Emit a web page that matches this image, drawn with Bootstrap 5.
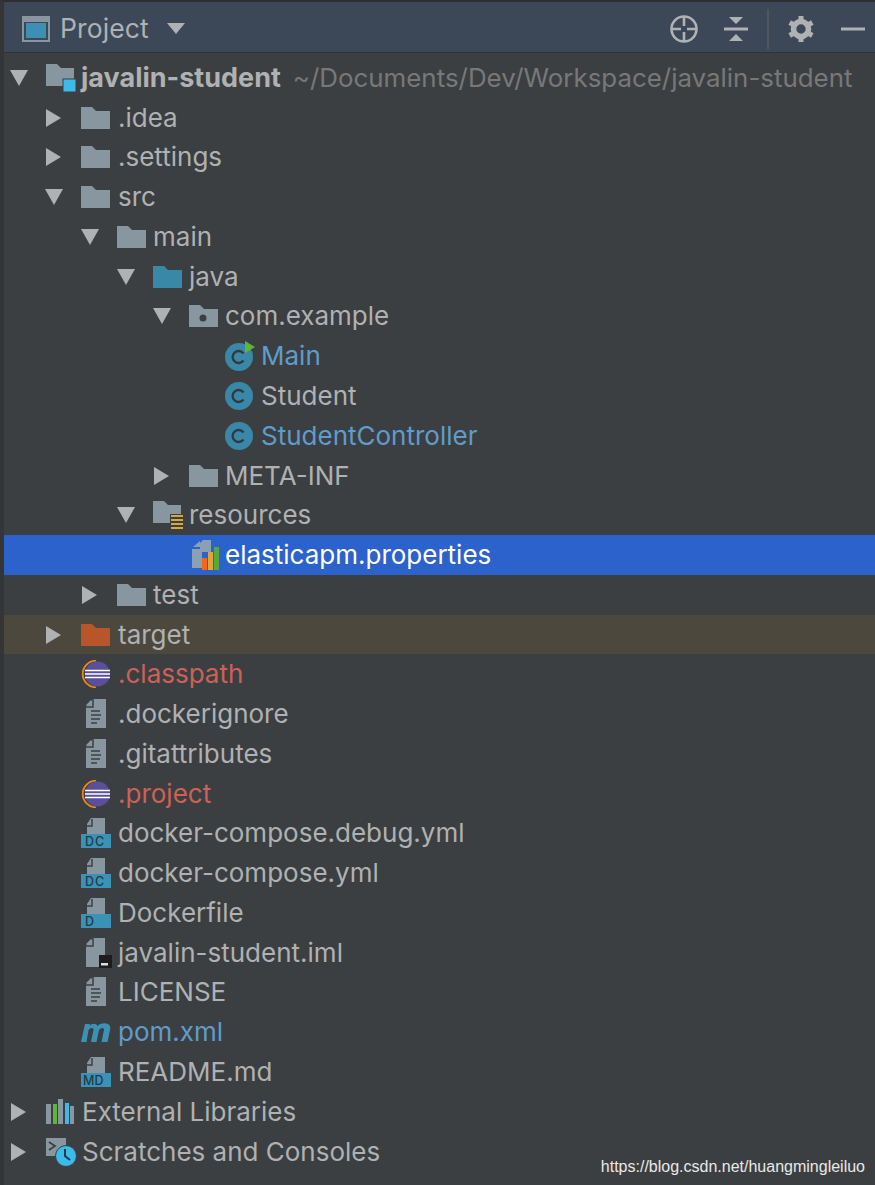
<!DOCTYPE html>
<html lang="en"><head><meta charset="utf-8"><title>Project</title>
<link href="https://cdn.jsdelivr.net/npm/bootstrap@5.3.0/dist/css/bootstrap.min.css" rel="stylesheet">
<style>
html,body{margin:0;height:1185px;overflow:hidden;background:#3c3f41}
.shell{height:1185px;border-left:4px solid #333537;border-top:2px solid #2e2e2e;font-family:Inter,"Liberation Sans",sans-serif;position:relative;color:#afb1b3}
.hdr{height:51px;background:#3c4858;border-bottom:1px solid #323232;color:#afb1b3;padding-left:18px;padding-top:3px}
.hdr-title{font-size:26.5px;margin-left:10px;margin-right:18px;letter-spacing:.1px}
.act-b{margin-left:24px}
.act-sep{display:block;width:2px;height:40px;background:#4f5660;margin-left:18px}
.act-g{margin-left:19px}
.act-m{margin-left:27px;margin-right:10px}
.tree{padding-top:5px}
.rw{height:39.78px;font-size:26px;white-space:nowrap;line-height:1}
.rw svg{flex:none;display:block}
.arr{width:36px;flex:none}
.ico{width:36px;flex:none}
.d0{padding-left:6px}.d1{padding-left:41px}.d2{padding-left:77px}.d3{padding-left:113px}.d4{padding-left:149px}.d5{padding-left:185px}
.d1 .ico{width:37px}
.sel{background:#2c62cc;color:#fff}
.exc{background:#4d483d}
.lnk{color:#5f9ccb}
.red{color:#cc6155}
.pth{color:#787878;font-weight:400;margin-left:12px;font-size:25.9px}
.bld{font-weight:700;font-size:27px}
.wm{position:absolute;right:10px;bottom:9px;font:16px "Liberation Sans",sans-serif;color:#e8e8e8}
.ind3{margin-left:3px}
.gap5{margin-right:5px}
</style></head><body>
<svg width="0" height="0" class="d-none">
<defs>
<symbol id="down" viewBox="0 0 18 18"><path d="M0 1H18L9 17Z" fill="#afb1b3"/></symbol>
<symbol id="right" viewBox="0 0 18 18"><path d="M1 0V18L16 9Z" fill="#afb1b3"/></symbol>
<symbol id="folder" viewBox="0 0 30 24"><path d="M0 1H11L15 5H29V23H0Z" fill="#87969f"/></symbol>
<symbol id="pfolder" viewBox="0 0 30 24"><path d="M0 1H11L15 5H29V23H0Z" fill="#87969f"/><circle cx="14" cy="14" r="3.5" fill="#3c3f41"/></symbol>
<symbol id="jfolder" viewBox="0 0 30 24"><path d="M0 1H11L15 5H29V23H0Z" fill="#3a88a8"/></symbol>
<symbol id="cls" viewBox="0 0 28 28"><circle cx="14" cy="14" r="14" fill="#3a88a8"/><path d="M18.5 10.5A6 6 0 1 0 18.5 17.5" fill="none" stroke="#32393f" stroke-width="2.4"/></symbol>
<symbol id="doc" viewBox="0 0 22 30"><path d="M8 0H21V29H1V7ZM6 1V6H1Z" fill="#87969f"/><path d="M6 12H15M6 16H16M6 20H15M6 24H12" stroke="#3c3f41" stroke-width="1.6" fill="none"/><path d="M8 0V8H0" fill="none" stroke="#3c3f41" stroke-width="1.5"/></symbol>
<symbol id="dock" viewBox="0 0 30 30"><path d="M10 0H24V16H6V6Z" fill="#87969f"/><path d="M11 1V8H5" fill="none" stroke="#3c3f41" stroke-width="1.5"/><rect x="0" y="16" width="30" height="14" fill="#3a93b6"/></symbol>
<symbol id="ecl" viewBox="0 0 30 28"><path d="M15 .7A13.300 13.300 0 0 0 15 27.300" fill="none" stroke="#e88a1a" stroke-width="1.8"/><circle cx="16.500" cy="14" r="12.500" fill="#5b4f9c"/><path d="M4 10.500H29M4 14H29M4 17.500H29" stroke="#fff" stroke-width="1.5"/></symbol>
</defs></svg>
<div class="shell">
<div class="hdr d-flex align-items-center">
<svg width="28" height="26" viewBox="0 0 28 26"><rect x="1" y="1" width="26" height="24" fill="none" stroke="#87969f" stroke-width="2"/><rect x="1" y="1" width="26" height="5" fill="#87969f"/><rect x="4" y="7" width="20" height="15" fill="#3d8fb5"/></svg>
<span class="hdr-title">Project</span>
<svg width="18" height="11" viewBox="0 0 18 11"><path d="M0 0H18L9 11Z" fill="#afb1b3"/></svg>
<div class="ms-auto d-flex align-items-center">
<svg width="30" height="30" viewBox="0 0 30 30"><circle cx="15" cy="15" r="12.5" fill="none" stroke="#afb1b3" stroke-width="2.6"/><path d="M15 3V12M15 18V27M3 15H12M18 15H27" stroke="#afb1b3" stroke-width="2.6"/></svg>
<svg class="act-b" width="26" height="28" viewBox="0 0 26 28"><path d="M1 14H25" stroke="#afb1b3" stroke-width="3"/><path d="M6 2H20L13 9ZM6 26H20L13 19Z" fill="#afb1b3"/></svg>
<span class="act-sep"></span>
<svg class="act-g" width="26" height="28" viewBox="0 0 26 28"><circle cx="13" cy="14" r="7.5" fill="none" stroke="#afb1b3" stroke-width="5.6"/><path d="M13 1V6M13 22V27M1.700 7.500L6 10M20 18L24.300 20.500M1.700 20.500L6 18M20 10L24.300 7.500" stroke="#afb1b3" stroke-width="5"/></svg>
<svg class="act-m" width="24" height="6" viewBox="0 0 24 6"><path d="M0 3H24" stroke="#afb1b3" stroke-width="3"/></svg>
</div>
</div>
<div class="tree">
<div class="rw d0 d-flex align-items-center"><span class="arr"><svg width="18" height="18"><use href="#down"/></svg></span><svg width="35" height="30" viewBox="0 0 35 30"><path d="M0 1H11L15 5H28V23H0Z" fill="#87969f"/><rect x="17" y="16" width="13" height="13" fill="#3dbbe8" stroke="#3c3f41"/></svg><span class="bld">javalin-student</span><span class="pth">~/Documents/Dev/Workspace/javalin-student</span></div>
<div class="rw d1 d-flex align-items-center"><span class="arr"><svg width="18" height="18"><use href="#right"/></svg></span><span class="ico"><svg width="30" height="24"><use href="#folder"/></svg></span>.idea</div>
<div class="rw d1 d-flex align-items-center"><span class="arr"><svg width="18" height="18"><use href="#right"/></svg></span><span class="ico"><svg width="30" height="24"><use href="#folder"/></svg></span>.settings</div>
<div class="rw d1 d-flex align-items-center"><span class="arr"><svg width="18" height="18"><use href="#down"/></svg></span><span class="ico"><svg width="30" height="24"><use href="#folder"/></svg></span>src</div>
<div class="rw d2 d-flex align-items-center"><span class="arr"><svg width="18" height="18"><use href="#down"/></svg></span><span class="ico"><svg width="30" height="24"><use href="#folder"/></svg></span>main</div>
<div class="rw d3 d-flex align-items-center"><span class="arr"><svg width="18" height="18"><use href="#down"/></svg></span><span class="ico"><svg width="30" height="24"><use href="#jfolder"/></svg></span>java</div>
<div class="rw d4 d-flex align-items-center"><span class="arr"><svg width="18" height="18"><use href="#down"/></svg></span><span class="ico"><svg width="30" height="24"><use href="#pfolder"/></svg></span>com.example</div>
<div class="rw d5 d-flex align-items-center lnk"><span class="arr"></span><span class="ico"><svg width="30" height="30" viewBox="0 0 30 30"><use href="#cls" width="28" height="28" y="2"/><path d="M20 0V12L30 6Z" fill="#5fb536"/></svg></span>Main</div>
<div class="rw d5 d-flex align-items-center"><span class="arr"></span><span class="ico"><svg width="28" height="28"><use href="#cls"/></svg></span>Student</div>
<div class="rw d5 d-flex align-items-center lnk"><span class="arr"></span><span class="ico"><svg width="28" height="28"><use href="#cls"/></svg></span>StudentController</div>
<div class="rw d4 d-flex align-items-center"><span class="arr"><svg width="18" height="18"><use href="#right"/></svg></span><span class="ico"><svg width="30" height="24"><use href="#folder"/></svg></span>META-INF</div>
<div class="rw d3 d-flex align-items-center"><span class="arr"><svg width="18" height="18"><use href="#down"/></svg></span><span class="ico"><svg width="32" height="30" viewBox="0 0 32 30"><path d="M0 1H11L15 5H28V23H0Z" fill="#87969f"/><rect x="17" y="14" width="13" height="15" fill="#3c3f41"/><path d="M18 16H30M18 20H30M18 24H30M18 28H30" stroke="#dba73c" stroke-width="2"/></svg></span>resources</div>
<div class="rw d4 sel d-flex align-items-center"><span class="arr"></span><span class="ico"><svg class="ind3" width="28" height="30" viewBox="0 0 28 30"><path d="M11 0H19V12H10V28H0V9H8V3ZM8 1V7H1Z" fill="#8aa0b4"/><rect x="10" y="18" width="5" height="12" fill="#f26522"/><rect x="16" y="12" width="5" height="18" fill="#dba73c"/><rect x="22" y="7" width="5" height="23" fill="#59a83c"/></svg></span>elasticapm.properties</div>
<div class="rw d2 d-flex align-items-center"><span class="arr"><svg width="18" height="18"><use href="#right"/></svg></span><span class="ico"><svg width="30" height="24"><use href="#folder"/></svg></span>test</div>
<div class="rw d1 exc d-flex align-items-center"><span class="arr"><svg width="18" height="18"><use href="#right"/></svg></span><span class="ico"><svg width="30" height="24" viewBox="0 0 30 24"><path d="M0 1H11L15 5H29V23H0Z" fill="#b8562a"/></svg></span>target</div>
<div class="rw d1 d-flex align-items-center red"><span class="arr"></span><span class="ico"><svg width="30" height="28"><use href="#ecl"/></svg></span>.classpath</div>
<div class="rw d1 d-flex align-items-center"><span class="arr"></span><span class="ico"><svg class="ms-1" width="22" height="30"><use href="#doc"/></svg></span>.dockerignore</div>
<div class="rw d1 d-flex align-items-center"><span class="arr"></span><span class="ico"><svg class="ms-1" width="22" height="30"><use href="#doc"/></svg></span>.gitattributes</div>
<div class="rw d1 d-flex align-items-center red"><span class="arr"></span><span class="ico"><svg width="30" height="28"><use href="#ecl"/></svg></span>.project</div>
<div class="rw d1 d-flex align-items-center"><span class="arr"></span><span class="ico"><svg width="30" height="30" viewBox="0 0 30 30"><use href="#dock"/><text x="4" y="28" font-family="Inter,sans-serif" font-weight="500" font-size="12.500" letter-spacing="1" fill="#26394a">DC</text></svg></span>docker-compose.debug.yml</div>
<div class="rw d1 d-flex align-items-center"><span class="arr"></span><span class="ico"><svg width="30" height="30" viewBox="0 0 30 30"><use href="#dock"/><text x="4" y="28" font-family="Inter,sans-serif" font-weight="500" font-size="12.500" letter-spacing="1" fill="#26394a">DC</text></svg></span>docker-compose.yml</div>
<div class="rw d1 d-flex align-items-center"><span class="arr"></span><span class="ico"><svg width="30" height="30" viewBox="0 0 30 30"><use href="#dock"/><text x="4" y="28" font-family="Inter,sans-serif" font-weight="500" font-size="12.500" fill="#26394a">D</text></svg></span>Dockerfile</div>
<div class="rw d1 d-flex align-items-center"><span class="arr"></span><span class="ico"><svg class="ms-1" width="28" height="30" viewBox="0 0 28 30"><path d="M8 0H20V17H14V29H1V7ZM6 1V6H1Z" fill="#87969f"/><path d="M8 0V8H0" fill="none" stroke="#3c3f41" stroke-width="1.5"/><rect x="14" y="17" width="13" height="13" fill="#1d1d1d"/><rect x="16" y="25" width="7" height="2.500" fill="#ddd"/></svg></span>javalin-student.iml</div>
<div class="rw d1 d-flex align-items-center"><span class="arr"></span><span class="ico"><svg class="ms-1" width="22" height="30"><use href="#doc"/></svg></span>LICENSE</div>
<div class="rw d1 d-flex align-items-center lnk"><span class="arr"></span><span class="ico"><svg width="30" height="22" viewBox="0 0 30 22"><path d="M0 21L4 3H9L8.500 5C11 2 15 2 16.500 5C19 2 24 1.500 27 3C29.500 4.500 29.500 7 29 9L26.500 21H20.500L23 9C23.500 6.500 20 6 18 9L15.500 21H10L12.500 9C13 6.500 9.500 6 7.500 9L5.500 21Z" fill="#3a93b6"/></svg></span>pom.xml</div>
<div class="rw d1 d-flex align-items-center"><span class="arr"></span><span class="ico"><svg width="30" height="30" viewBox="0 0 30 30"><use href="#dock"/><text x="2" y="28" font-family="Inter,sans-serif" font-weight="500" font-size="12.500" fill="#26394a">MD</text></svg></span>README.md</div>
<div class="rw d0 d-flex align-items-center"><span class="arr"><svg width="18" height="18"><use href="#right"/></svg></span><svg class="gap5" width="31" height="26" viewBox="0 0 31 26"><rect x="0" y="5" width="5" height="20" fill="#87969f"/><rect x="7" y="5" width="4" height="20" fill="#5fb536"/><rect x="12" y="0" width="5" height="25" fill="#87969f"/><rect x="19" y="4" width="4" height="21" fill="#3dbbe8"/><rect x="24" y="7" width="4" height="18" fill="#87969f"/></svg>External Libraries</div>
<div class="rw d0 d-flex align-items-center"><span class="arr"><svg width="18" height="18"><use href="#right"/></svg></span><svg class="gap5" width="31" height="32" viewBox="0 0 31 32"><path d="M0 2H20V20H0Z" fill="#87969f"/><path d="M3 6L9 10L3 14" fill="none" stroke="#3c3f41" stroke-width="1.8"/><circle cx="20" cy="20" r="10.500" fill="#3dbbe8" stroke="#3c3f41"/><path d="M19 13V20L24 24" fill="none" stroke="#26394a" stroke-width="2"/></svg>Scratches and Consoles</div>
</div>
<span class="wm">https://blog.csdn.net/huangmingleiluo</span>
</div>
<script src="https://cdn.jsdelivr.net/npm/bootstrap@5.3.0/dist/js/bootstrap.bundle.min.js"></script>
</body></html>
